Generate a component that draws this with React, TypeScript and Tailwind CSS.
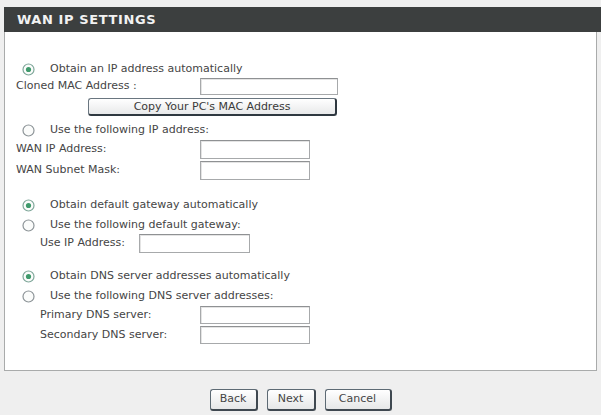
import React from 'react';

type RadioProps = { checked?: boolean };

function Radio({ checked = false }: RadioProps) {
  return (
    <svg width="13" height="13" viewBox="0 0 13 13" className="shrink-0">
      <circle cx="6.5" cy="6.5" r="5.5" fill="#fbfcfb" stroke={checked ? '#7fa79a' : '#8d9498'} strokeWidth="1.2" />
      {checked && <circle cx="6.5" cy="6.5" r="2.6" fill="#3f9a6c" />}
    </svg>
  );
}

function TextBox({ width }: { width: string }) {
  return (
    <div
      className={`${width} h-full border border-[#a7a9ab] border-t-[#8f9193] bg-white shadow-[inset_1px_1px_0_#e4e4e4]`}
    />
  );
}

function RadioRow({ label, checked, className = '' }: { label: string; checked?: boolean; className?: string }) {
  return (
    <div className={`flex items-center h-[18px] pl-[17px] ${className}`}>
      <Radio checked={checked} />
      <span className="ml-[15px]">{label}</span>
    </div>
  );
}

function FieldRow({
  label,
  indent,
  inputLeft,
  inputWidth,
  className = '',
}: {
  label: string;
  indent: string;
  inputLeft: string;
  inputWidth: string;
  className?: string;
}) {
  return (
    <div className={`flex items-stretch ${className}`}>
      <span className={`${indent} ${inputLeft} flex items-center shrink-0`}>{label}</span>
      <TextBox width={inputWidth} />
    </div>
  );
}

function FormButton({ label, width }: { label: string; width: string }) {
  return (
    <button
      className={`${width} h-[22px] rounded-[3px] border border-[#5d6a74] border-r-2 border-b-2 border-r-[#3f4850] border-b-[#3f4850] bg-gradient-to-b from-white to-[#e6e7e8] text-[11px] text-[#454545]`}
    >
      {label}
    </button>
  );
}

export default function App() {
  return (
    <div
      className="w-[601px] h-[415px] bg-[#efefef] pt-[7px] pl-[4px] text-[11px] text-[#454545] overflow-hidden"
      style={{ fontFamily: '"DejaVu Sans", Verdana, sans-serif' }}
    >
      <div className="w-[593px] bg-white border-l border-r border-b border-[#a9abab]">
        {/* title bar */}
        <div className="h-[25px] -ml-px -mr-[5px] bg-[#3c3f3f] flex items-center pl-[13px]">
          <span className="text-[13px] font-bold tracking-[0.6px] text-[#f2f2f2]">WAN IP SETTINGS</span>
        </div>

        <div className="flex flex-col pt-[28px] pb-[26px]">
          <RadioRow label="Obtain an IP address automatically" checked />
          <FieldRow label="Cloned MAC Address :" indent="pl-[11px]" inputLeft="w-[195px]" inputWidth="w-[138px]" className="h-[17px]" />
          <div className="mt-[3px] pl-[83px]">
            <button className="w-[249px] h-[18px] rounded-[3px] border border-[#6a7680] border-r-2 border-b-2 border-r-[#2f3840] border-b-[#2f3840] bg-gradient-to-b from-white to-[#e8e9ea] text-[11px] text-[#3a3a3a] leading-none">
              Copy Your PC's MAC Address
            </button>
          </div>
          <RadioRow label="Use the following IP address:" className="mt-[5px]" />
          <FieldRow label="WAN IP Address:" indent="pl-[11px]" inputLeft="w-[195px]" inputWidth="w-[110px]" className="mt-[1px] h-[19px]" />
          <FieldRow label="WAN Subnet Mask:" indent="pl-[11px]" inputLeft="w-[195px]" inputWidth="w-[110px]" className="mt-[2px] h-[19px]" />

          <RadioRow label="Obtain default gateway automatically" checked className="mt-[16px]" />
          <RadioRow label="Use the following default gateway:" className="mt-[2px]" />
          <FieldRow label="Use IP Address:" indent="pl-[35px]" inputLeft="w-[134px]" inputWidth="w-[111px]" className="h-[19px]" />

          <RadioRow label="Obtain DNS server addresses automatically" checked className="mt-[14px]" />
          <RadioRow label="Use the following DNS server addresses:" className="mt-[2px]" />
          <FieldRow label="Primary DNS server:" indent="pl-[35px]" inputLeft="w-[195px]" inputWidth="w-[110px]" className="mt-[1px] h-[18px]" />
          <FieldRow label="Secondary DNS server:" indent="pl-[35px]" inputLeft="w-[195px]" inputWidth="w-[110px]" className="mt-[2px] h-[18px]" />
        </div>
      </div>

      <div className="flex justify-center gap-[9px] mt-[18px] pr-[4px]">
        <FormButton label="Back" width="w-[48px]" />
        <FormButton label="Next" width="w-[49px]" />
        <FormButton label="Cancel" width="w-[67px]" />
      </div>
    </div>
  );
}
